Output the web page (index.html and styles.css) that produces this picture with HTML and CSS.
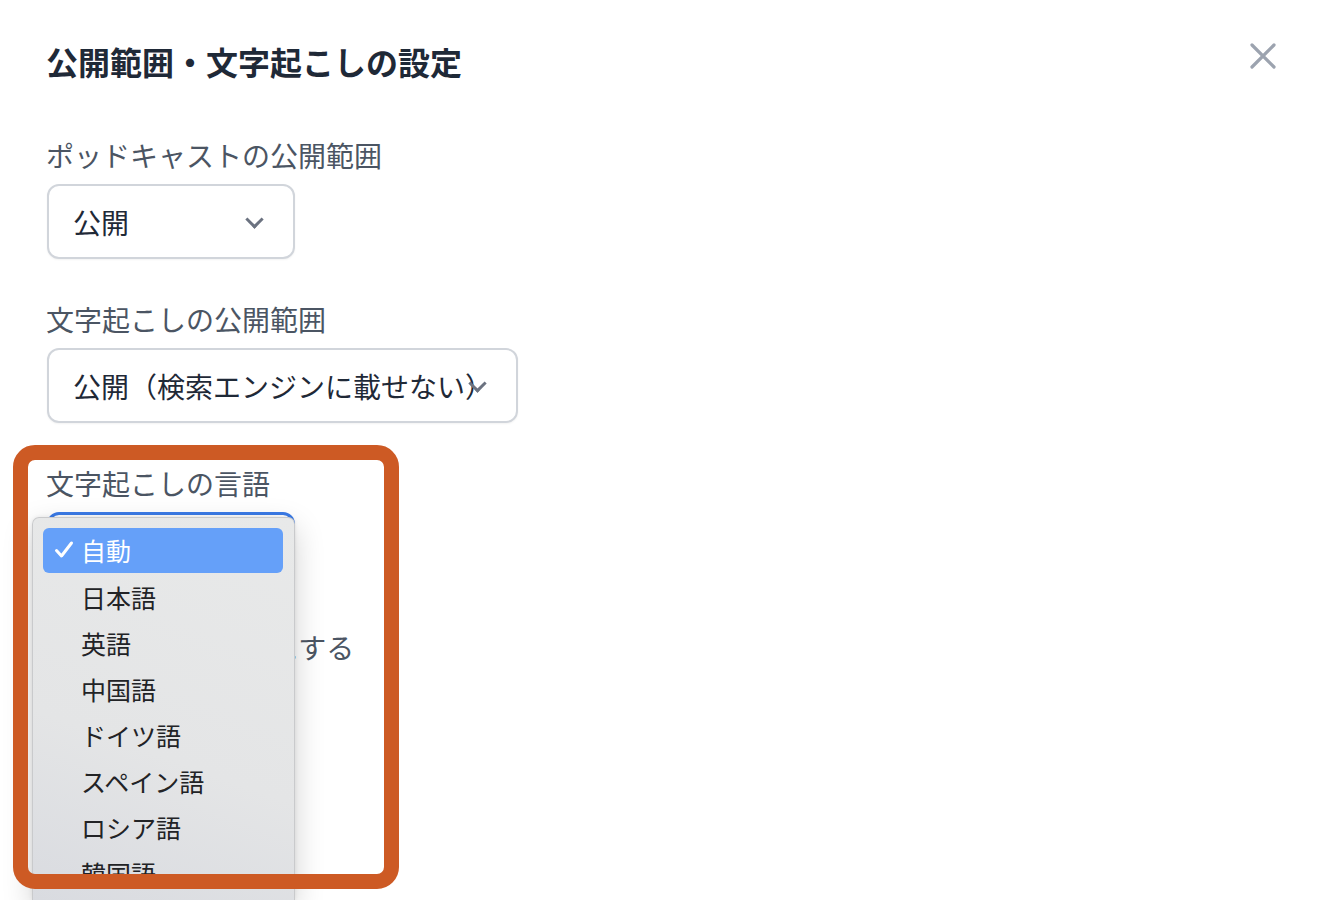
FILE: index.html
```html
<!DOCTYPE html>
<html lang="ja">
<head>
    <meta charset="UTF-8">
    <meta name="viewport" content="width=device-width, initial-scale=1.0">
    <title>公開範囲・文字起こしの設定</title>
    <link rel="stylesheet" href="styles.css">
</head>
<body>
    <!-- 設定モーダル -->
    <div class="modal">
        <div class="modal-header">
            <h2>公開範囲・文字起こしの設定</h2>
            <button class="close-btn" aria-label="閉じる">
                <svg width="26" height="26" viewBox="0 0 26 26">
                    <path d="M2 2 L24 24 M24 2 L2 24" stroke="#9ca3af" stroke-width="3.2" stroke-linecap="round"/>
                </svg>
            </button>
        </div>

        <div class="form-group">
            <label>ポッドキャストの公開範囲</label>
            <div class="select select-small">
                <span class="select-text">公開</span>
                <span class="chevron"></span>
            </div>
        </div>

        <div class="form-group">
            <label>文字起こしの公開範囲</label>
            <div class="select select-wide">
                <span class="select-text">公開（検索エンジンに載せない）</span>
                <span class="chevron"></span>
            </div>
        </div>

        <div class="form-group">
            <label>文字起こしの言語</label>
            <div class="select select-small focused">
                <span class="select-text">自動</span>
                <span class="chevron"></span>
            </div>
        </div>

        <div class="form-group">
            <label>文字起こしを有効にする</label>
        </div>
    </div>

    <!-- 開いているドロップダウン -->
    <div class="dropdown">
        <div class="dropdown-item selected">
            <svg class="check" width="20" height="20" viewBox="0 0 20 20">
                <path d="M2.5 10.5 L7.5 16 L17.5 3" fill="none" stroke="white" stroke-width="3" stroke-linecap="round" stroke-linejoin="round"/>
            </svg>自動
        </div>
        <div class="dropdown-item">日本語</div>
        <div class="dropdown-item">英語</div>
        <div class="dropdown-item">中国語</div>
        <div class="dropdown-item">ドイツ語</div>
        <div class="dropdown-item">スペイン語</div>
        <div class="dropdown-item">ロシア語</div>
        <div class="dropdown-item">韓国語</div>
    </div>

    <!-- 注目枠 -->
    <div class="highlight-box"></div>
</body>
</html>
```

FILE: styles.css
```css
/* 基本樣式 */
body {
    margin: 0;
    background-color: white;
    font-family: "Noto Sans CJK JP", "Noto Sans", sans-serif;
    color: #4b5563;
    overflow: hidden;
    height: 900px;
}

.modal {
    padding: 37px 64px 0 46px;
}

.modal-header {
    display: flex;
    justify-content: space-between;
    align-items: flex-start;
    margin-bottom: 50px;
}

.modal-header h2 {
    margin: 0;
    font-size: 32px;
    line-height: 48px;
    font-weight: 700;
    color: #1f2937;
}

.close-btn {
    background: none;
    border: none;
    padding: 0;
    margin-top: 6px;
    cursor: pointer;
}

.form-group {
    margin-bottom: 40px;
}

.form-group label {
    display: block;
    font-size: 28px;
    line-height: 40px;
    color: #4b5563;
    margin-bottom: 9px;
}

.select {
    display: flex;
    align-items: center;
    position: relative;
    box-sizing: border-box;
    height: 75px;
    margin-left: 1px;
    padding: 0 28px 0 24px;
    border: 2px solid #d1d5db;
    border-radius: 12px;
    box-shadow: 0 1px 2px rgba(0, 0, 0, 0.05);
    background-color: white;
    font-size: 28px;
    color: #1f2937;
}

.select-small {
    width: 248px;
}

.select-wide {
    width: 471px;
}

.select.focused {
    border: 3px solid #3b7be8;
}

.select-text {
    white-space: nowrap;
    flex: 1;
}

.chevron {
    position: absolute;
    right: 32px;
    top: 27px;
    width: 10px;
    height: 10px;
    border-right: 3px solid #6b7280;
    border-bottom: 3px solid #6b7280;
    transform: rotate(45deg);
}

/* ドロップダウン */
.dropdown {
    position: absolute;
    left: 32px;
    top: 517px;
    width: 263px;
    height: 383px;
    box-sizing: border-box;
    padding: 10px 11px 0 10px;
    border: 1px solid #c9cacc;
    border-bottom: none;
    border-radius: 7px 7px 0 0;
    background: linear-gradient(20deg, #d9dbe0 0%, #e4e5e6 40%, #e8e9e9 100%);
    box-shadow: 0 10px 30px rgba(0, 0, 0, 0.18), 0 0 4px rgba(0, 0, 0, 0.08);
}

.dropdown-item {
    position: relative;
    height: 46px;
    line-height: 46px;
    padding-left: 38px;
    font-size: 25px;
    color: #222326;
}

.dropdown-item.selected {
    height: 45px;
    line-height: 45px;
    margin-bottom: 1px;
    background-color: #65a0f9;
    border-radius: 6px;
    color: white;
}

.check {
    position: absolute;
    left: 11px;
    top: 12px;
}

/* 注目枠 */
.highlight-box {
    position: absolute;
    left: 13px;
    top: 445px;
    width: 386px;
    height: 444px;
    box-sizing: border-box;
    border: 15px solid #cd5a24;
    border-radius: 22px;
}
```
